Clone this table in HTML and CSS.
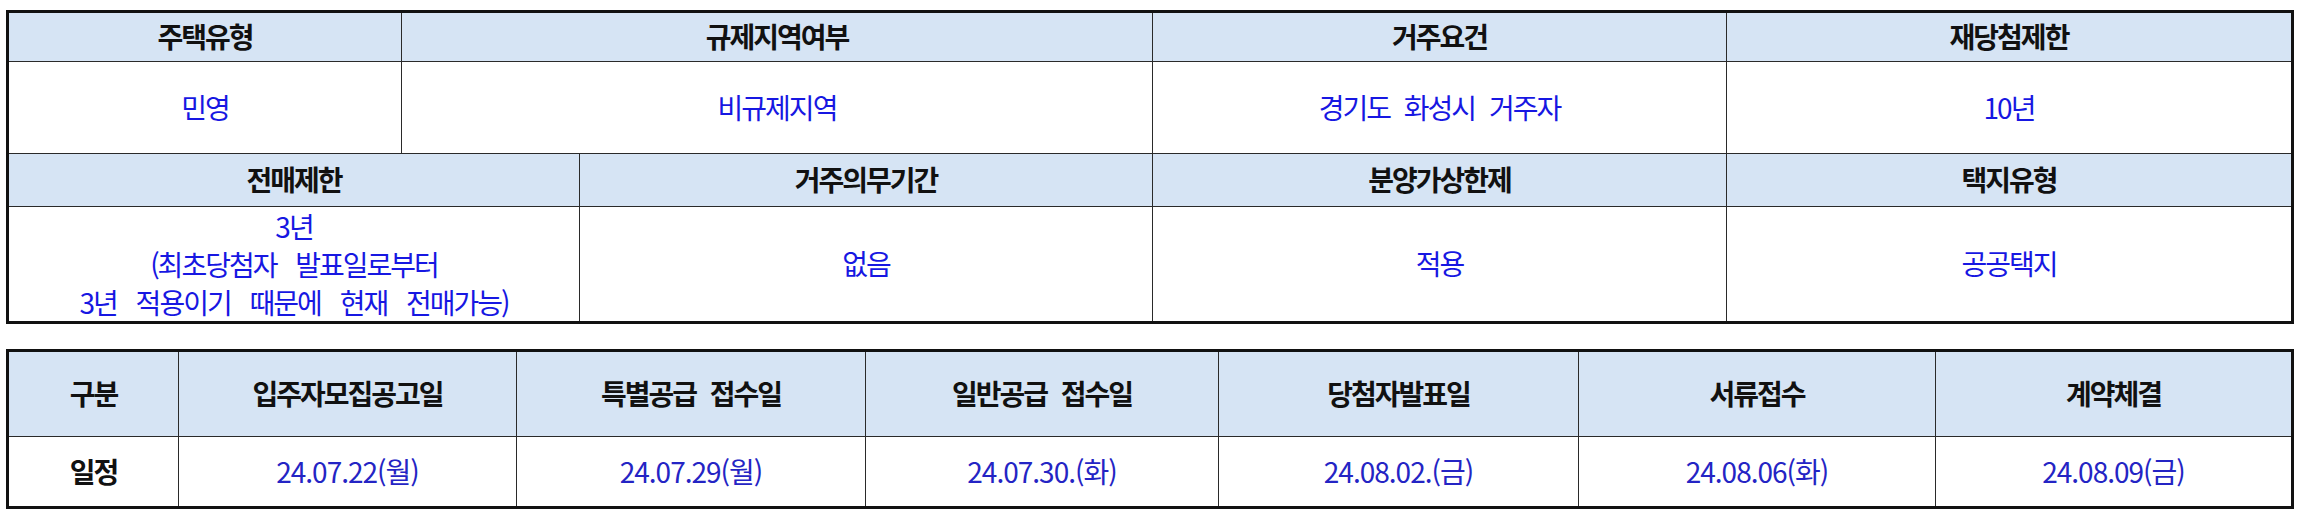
FILE: index.html
```html
<!DOCTYPE html>
<html lang="ko">
<head>
<meta charset="utf-8">
<title>분양 정보</title>
<link rel="stylesheet" href="styles.css">
</head>
<body>
<div class="page">
  <table class="tbl info">
    <colgroup>
      <col class="c393"><col class="c178"><col class="c573"><col class="c574"><col class="c564">
    </colgroup>
    <tr class="hrow h1">
      <th>주택유형</th>
      <th colspan="2">규제지역여부</th>
      <th>거주요건</th>
      <th>재당첨제한</th>
    </tr>
    <tr class="drow d1">
      <td>민영</td>
      <td colspan="2">비규제지역</td>
      <td>경기도 화성시 거주자</td>
      <td>10년</td>
    </tr>
    <tr class="hrow h2">
      <th colspan="2">전매제한</th>
      <th>거주의무기간</th>
      <th>분양가상한제</th>
      <th>택지유형</th>
    </tr>
    <tr class="drow d2">
      <td colspan="2" class="multi">3년<br>(최초당첨자 발표일로부터<br>3년 적용이기 때문에 현재 전매가능)</td>
      <td>없음</td>
      <td>적용</td>
      <td>공공택지</td>
    </tr>
  </table>

  <table class="tbl sched">
    <colgroup>
      <col class="s170"><col class="s338"><col class="s349"><col class="s353"><col class="s360"><col class="s357"><col class="s355">
    </colgroup>
    <tr class="hrow sh">
      <th>구분</th>
      <th>입주자모집공고일</th>
      <th>특별공급 접수일</th>
      <th>일반공급 접수일</th>
      <th>당첨자발표일</th>
      <th>서류접수</th>
      <th>계약체결</th>
    </tr>
    <tr class="drow sd">
      <th class="rowhead">일정</th>
      <td>24.07.22(월)</td>
      <td>24.07.29(월)</td>
      <td>24.07.30.(화)</td>
      <td>24.08.02.(금)</td>
      <td>24.08.06(화)</td>
      <td>24.08.09(금)</td>
    </tr>
  </table>
</div>
</body>
</html>
```

FILE: styles.css
```css
html, body {
  margin: 0;
  padding: 0;
  background: #ffffff;
}

.page {
  padding: 10px 0 0 6px;
  display: flex;
  flex-direction: column;
  gap: 25px;
  font-family: "Noto Sans CJK KR", "Noto Sans", sans-serif;
  font-size: 28px;
}

.tbl {
  border-collapse: separate;
  border-spacing: 0;
  border: 3px solid #111111;
  width: 2288px;
  table-layout: fixed;
}

.tbl th,
.tbl td {
  padding: 0;
  text-align: center;
  vertical-align: middle;
  border-right: 1px solid #2a2a2a;
  border-bottom: 1px solid #2a2a2a;
  line-height: 1.2;
  letter-spacing: -2px;
  word-spacing: 8px;
  white-space: nowrap;
}

.tbl tr > *:last-child {
  border-right: none;
}

.tbl tr:last-child > * {
  border-bottom: none;
}

.tbl th {
  font-weight: 700;
  color: #111111;
}

.hrow th {
  background: #d6e4f4;
}

.tbl .rowhead {
  background: #ffffff;
}

.tbl td {
  font-weight: 400;
  color: #1717e2;
}

/* column widths: top table */
.c393 { width: 393px; }
.c178 { width: 178px; }
.c573 { width: 573px; }
.c574 { width: 574px; }
.c564 { width: 564px; }

/* column widths: schedule table */
.s170 { width: 170px; }
.s338 { width: 338px; }
.s349 { width: 349px; }
.s353 { width: 353px; }
.s360 { width: 360px; }
.s357 { width: 357px; }
.s355 { width: 355px; }

/* row heights: top table */
.h1 > * {
  height: 48px;
  border-bottom: 2px solid #666a70;
}

.d1 > * {
  height: 91px;
  border-bottom: 2px solid #666a70;
}

.h2 > * {
  height: 52px;
  border-bottom: 1px solid #111111;
}

.d2 > * {
  height: 114px;
}

.tbl td.multi {
  line-height: 38px;
  word-spacing: 13px;
}

/* schedule table */
.sh > * {
  height: 84px;
  border-bottom: 1px solid #222222;
}

.sd > * {
  height: 69px;
}

.sched td {
  color: #2424c4;
  letter-spacing: -1px;
}
```
